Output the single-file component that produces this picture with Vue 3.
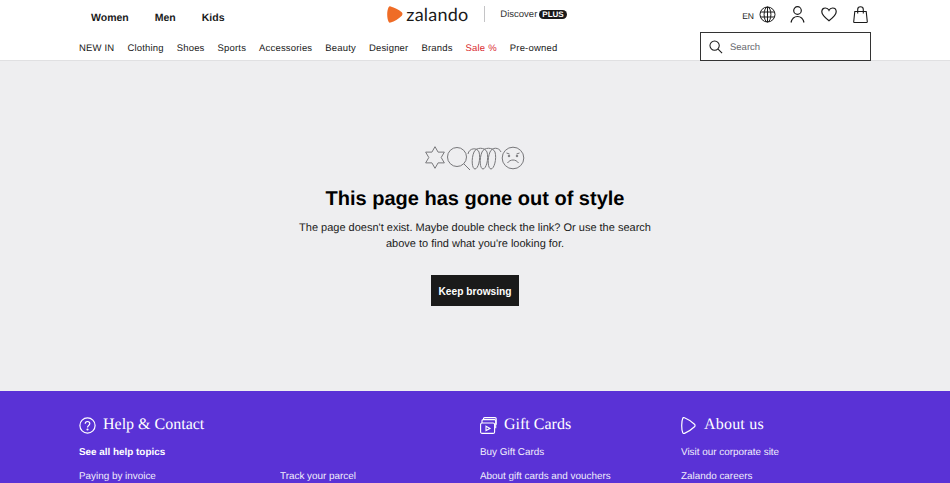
<template>
  <div class="page">
    <header class="header">
      <div class="top">
        <nav class="genders">
          <a v-for="g in genders" :key="g">{{ g }}</a>
        </nav>
        <div class="brand">
          <svg class="flame" width="16" height="17" viewBox="0 0 16 17">
            <path d="M1.600 1.200C.7 3 .2 5.600.2 8.500s.5 5.500 1.400 7.300c.4.800 1.100 1.100 2 .8 3.900-1.300 7.800-3.700 11.200-6.900.9-.9.9-2.500 0-3.400C11.400 3.100 7.500 1.700 3.600.4 2.800.1 2 .4 1.600 1.200z" fill="#ef6c26" />
          </svg>
          <span class="wordmark">zalando</span>
          <span class="divider"></span>
          <span class="discover">Discover</span>
          <span class="plus">PLUS</span>
        </div>
        <div class="tools">
          <span class="lang">EN</span>
          <svg width="17" height="17" viewBox="0 0 17 17" fill="none" stroke="#1a1a1a" stroke-width="1">
            <circle cx="8.500" cy="8.500" r="7.500" />
            <ellipse cx="8.500" cy="8.500" rx="3.400" ry="7.500" />
            <path d="M8.500 1v15M1.500 6h14M1.500 11h14" />
          </svg>
          <svg class="tool-user" width="15" height="17" viewBox="0 0 15 17" fill="none" stroke="#1a1a1a" stroke-width="1.200">
            <circle cx="7.500" cy="4.500" r="3.800" />
            <path d="M1 16.500C2 12.500 4.500 10.500 7.500 10.500s5.500 2 6.500 6" />
          </svg>
          <svg class="tool-heart" width="16" height="15" viewBox="0 0 16 15" fill="none" stroke="#1a1a1a" stroke-width="1.200">
            <path d="M8 13.800C3.500 10.300.8 7.800.8 4.800.8 2.500 2.500 1 4.400 1 6 1 7.300 1.900 8 3.300 8.700 1.900 10 1 11.600 1c1.900 0 3.600 1.500 3.600 3.800 0 3-2.700 5.500-7.200 9z" />
          </svg>
          <svg class="tool-bag" width="15" height="17" viewBox="0 0 15 17" fill="none" stroke="#1a1a1a" stroke-width="1.100">
            <path d="M1.800 5.500h11.400l1.100 10.200c0 .5-.3.800-.8.800H1.500c-.5 0-.8-.3-.8-.8z" />
            <path d="M4.700 7.500V3.400C4.700 1.800 5.900.7 7.500.7s2.800 1.100 2.800 2.700v4.100" />
          </svg>
        </div>
      </div>
      <div class="bottom">
        <nav class="cats">
          <a v-for="c in categories" :key="c" :class="{ sale: c === 'Sale %' }">{{ c }}</a>
        </nav>
        <div class="search">
          <svg width="14" height="14" viewBox="0 0 15 15" fill="none" stroke="#1a1a1a" stroke-width="1.100">
            <circle cx="6" cy="6" r="5" />
            <path d="M9.700 9.700L14 14" />
          </svg>
          <span>Search</span>
        </div>
      </div>
    </header>

    <main class="main">
      <svg class="doodle" width="100" height="25" viewBox="0 0 100 25" fill="none" stroke="#77777a" stroke-width="1">
        <path d="M10 .7l3.100 5.430 6.250-.03-3.150 5.400 3.150 5.400-6.250-.03L10 22.300l-3.100-5.430-6.250.03 3.150-5.400L.65 6.100l6.250.03z" />
        <circle cx="32" cy="11" r="9.500" />
        <path d="M38.800 17.800L45 24" />
        <path d="M43 8C44 2 52 1 54 6C56 13 53 23 50 23C47 23 46 13 49 6C51 1 60 1 62 6C64 13 61 23 58 23C55 23 54 13 57 6C59 1 68 1 70 6C72 13 69 23 66 23C63 23 62 13 65 6C67 1 74 1 76 6" />
        <circle cx="88" cy="12" r="10.800" />
        <circle cx="84" cy="10" r=".8" fill="#77777a" />
        <circle cx="92" cy="10" r=".8" fill="#77777a" />
        <path d="M82.500 17c2.500-4 8.500-4 11 0M81.500 7l3 1M94.500 7l-3 1" />
      </svg>
      <h1>This page has gone out of style</h1>
      <p>The page doesn't exist. Maybe double check the link? Or use the search above to find what you're looking for.</p>
      <button class="keep">Keep browsing</button>
    </main>

    <footer class="footer">
      <section class="col help">
        <h2>
          <svg width="17" height="17" viewBox="0 0 17 17" fill="none" stroke="#fff" stroke-width="1.200">
            <circle cx="8.500" cy="8.500" r="7.600" />
            <path d="M6.200 6.800c0-1.400 1-2.300 2.300-2.300s2.300.9 2.300 2.100c0 1.900-2.300 1.900-2.300 3.800" />
            <circle cx="8.500" cy="12.500" r=".5" fill="#fff" />
          </svg>
          Help &amp; Contact
        </h2>
        <div class="help-links">
          <a class="strong">See all help topics</a>
          <span></span>
          <a>Paying by invoice</a>
          <a>Track your parcel</a>
        </div>
      </section>
      <section class="col">
        <h2>
          <svg width="17" height="17" viewBox="0 0 17 17" fill="none" stroke="#fff" stroke-width="1.100">
            <rect x=".6" y="6" width="14" height="10.400" rx="1.500" />
            <path d="M2 6V3.800c0-.7.5-1.200 1.200-1.200h11.300c.7 0 1.200.5 1.200 1.200v7.500" />
            <path d="M3.500 2.600V1.800c0-.7.5-1.200 1.200-1.200h10.300c.7 0 1.200.5 1.200 1.200v6" />
            <path d="M6 9.200l4 2.200-4 2.200z" />
          </svg>
          Gift Cards
        </h2>
        <a>Buy Gift Cards</a>
        <a>About gift cards and vouchers</a>
      </section>
      <section class="col">
        <h2 class="about">
          <svg width="15" height="17" viewBox="0 0 15 17" fill="none" stroke="#fff" stroke-width="1.200">
            <path d="M1.800 1.200C1 3 .7 5.700.7 8.500s.3 5.500 1.100 7.300c.3.700 1 .9 1.700.6 3.500-1.300 6.900-3.700 10-6.600.7-.7.7-1.900 0-2.600C10.400 4.300 7 2.100 3.500.7 2.800.4 2.100.6 1.800 1.200z" />
          </svg>
          About us
        </h2>
        <a>Visit our corporate site</a>
        <a>Zalando careers</a>
      </section>
    </footer>
  </div>
</template>

<script setup>
const genders = ["Women", "Men", "Kids"];
const categories = [
  "NEW IN",
  "Clothing",
  "Shoes",
  "Sports",
  "Accessories",
  "Beauty",
  "Designer",
  "Brands",
  "Sale %",
  "Pre-owned",
];
</script>

<style>
html,
body {
  margin: 0;
  overflow: hidden;
}
</style>

<style scoped>
.page {
  width: 950px;
  height: 483px;
  overflow: hidden;
  display: flex;
  flex-direction: column;
  font-family: "Liberation Sans", Arial, sans-serif;
  color: #1a1a1a;
  background: #eeeef0;
  text-rendering: geometricPrecision;
}

.header {
  height: 61px;
  flex: none;
  background: #fff;
  border-bottom: 1px solid #e0e0e2;
  box-sizing: border-box;
  padding: 0 79px;
}

.top {
  height: 32px;
  display: grid;
  grid-template-columns: 1fr auto 1fr;
  align-items: center;
}

.genders {
  display: flex;
  gap: 26px;
  padding-left: 12px;
  padding-top: 3px;
  font-size: 10.500px;
  font-weight: 700;
}

.brand {
  display: flex;
  align-items: center;
  height: 28px;
  margin-left: 4px;
  padding-bottom: 4px;
}

.flame {
  margin-right: 3px;
}

.wordmark {
  font-family: Lato, sans-serif;
  font-size: 18px;
  letter-spacing: 0.2px;
}

.divider {
  width: 1px;
  height: 16px;
  background: #c4c4c6;
  margin: 0 15px 0 16px;
}

.discover {
  font-size: 9.500px;
  color: #333;
}

.plus {
  margin-left: 2px;
  background: #1a1a1a;
  color: #fff;
  border-radius: 6px;
  font-size: 8px;
  font-weight: 700;
  line-height: 9px;
  padding: 0 3px;
}

.tools {
  display: flex;
  align-items: center;
  justify-content: flex-end;
  padding-right: 3px;
  padding-bottom: 3px;
}

.lang {
  font-size: 8.500px;
  margin-right: 5px;
  padding-top: 2px;
}

.tool-user {
  margin-left: 14px;
}

.tool-heart {
  margin-left: 16px;
}

.tool-bag {
  margin-left: 16px;
}

.bottom {
  display: flex;
  justify-content: space-between;
  height: 29px;
}

.cats {
  display: flex;
  gap: 13px;
  align-items: center;
  padding-top: 3px;
  font-size: 9.500px;
  letter-spacing: 0.18px;
}

.sale {
  color: #d9272e;
}

.search {
  width: 171px;
  height: 29px;
  box-sizing: border-box;
  border: 1px solid #333;
  background: #fff;
  display: flex;
  align-items: center;
  gap: 7px;
  padding-left: 8px;
  font-size: 9.500px;
  color: #66676e;
}

.search span {
  padding-top: 1px;
}

.main {
  flex: none;
  height: 330px;
  display: flex;
  flex-direction: column;
  align-items: center;
  padding-top: 85px;
  box-sizing: border-box;
}

.doodle {
  display: block;
}

h1 {
  margin: 13px 0 0;
  font-size: 20px;
  line-height: 30px;
  font-weight: 700;
  color: #000;
}

p {
  margin: 6px 0 0;
  width: 360px;
  text-align: center;
  font-size: 11px;
  line-height: 16px;
  color: #1a1a1a;
}

.keep {
  margin-top: 23px;
  width: 88px;
  height: 31px;
  border: 0;
  padding: 1px 0 0;
  background: #1a1a1a;
  color: #fff;
  font: 700 10.200px "Liberation Sans", Arial, sans-serif;
}

.footer {
  flex: 1;
  background: #5a32d6;
  color: #fff;
  padding: 0 79px;
  display: grid;
  grid-template-columns: 401px 201px 1fr;
  font-size: 9.900px;
}

.col {
  display: flex;
  flex-direction: column;
  align-items: flex-start;
  padding-top: 25px;
}

.col a {
  opacity: 0.92;
  height: 24px;
  line-height: 13px;
}

.col a.strong {
  font-weight: 700;
  opacity: 1;
}

h2 {
  margin: 0 0 12px;
  height: 18px;
  display: flex;
  align-items: center;
  gap: 7px;
  font-family: "Liberation Serif", serif;
  font-size: 16px;
  font-weight: 400;
}

h2.about {
  gap: 8px;
  letter-spacing: 0.2px;
}

.help-links {
  display: grid;
  grid-template-columns: 201px 1fr;
  width: 100%;
}
</style>
